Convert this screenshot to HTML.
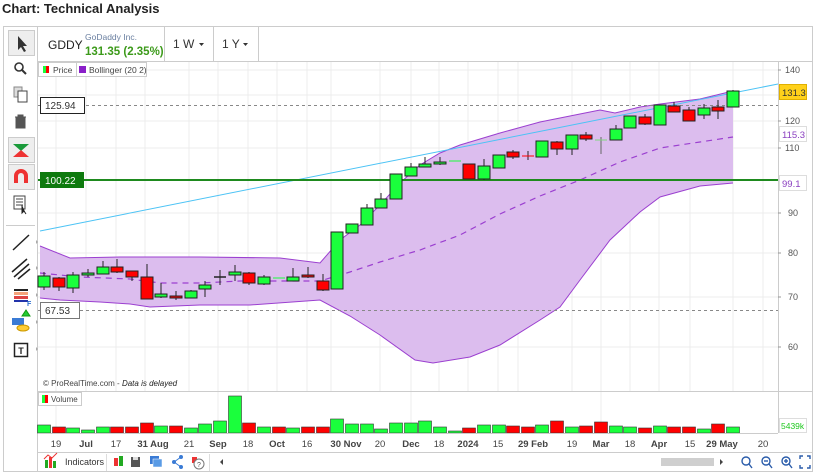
<!DOCTYPE html>
<html><head><meta charset="utf-8"><style>
html,body{margin:0;padding:0;background:#fff;width:819px;height:472px;overflow:hidden;font-family:"Liberation Sans",Arial,sans-serif}
svg{position:absolute;left:0;top:0}
text{font-family:"Liberation Sans",Arial,sans-serif}
</style></head><body>
<svg width="819" height="472" viewBox="0 0 819 472" xmlns="http://www.w3.org/2000/svg">
<text x="2" y="13" font-size="13" font-weight="bold" fill="#222">Chart: Technical Analysis</text>
<!-- outer frame -->
<rect x="3.5" y="26.5" width="809" height="445" fill="#fff" stroke="#ccc"/>
<line x1="37.5" y1="27" x2="37.5" y2="472" stroke="#ccc"/>
<!-- header -->
<line x1="38" y1="61.5" x2="812" y2="61.5" stroke="#ccc"/>
<line x1="164.5" y1="27" x2="164.5" y2="61" stroke="#ccc"/>
<line x1="213.5" y1="27" x2="213.5" y2="61" stroke="#ccc"/>
<line x1="258.5" y1="27" x2="258.5" y2="61" stroke="#ccc"/>
<text x="48" y="49" font-size="12" fill="#222">GDDY</text>
<text x="85" y="40" font-size="8.5" fill="#6a7fa0">GoDaddy Inc.</text>
<text x="85" y="55" font-size="11.5" fill="#3c9a1a" font-weight="bold">131.35 (2.35%)</text>
<text x="173" y="48" font-size="12" fill="#333">1 W</text><path d="M199 43 l5 0 l-2.5 3z" fill="#333"/>
<text x="222" y="48" font-size="12" fill="#333">1 Y</text><path d="M243 43 l5 0 l-2.5 3z" fill="#333"/>
<!-- grid -->
<g stroke="#ececec" stroke-width="1">
<line x1="56" y1="62" x2="56" y2="433"/><line x1="86" y1="62" x2="86" y2="433"/><line x1="116" y1="62" x2="116" y2="433"/><line x1="145" y1="62" x2="145" y2="433"/><line x1="189" y1="62" x2="189" y2="433"/><line x1="218" y1="62" x2="218" y2="433"/><line x1="248" y1="62" x2="248" y2="433"/><line x1="277" y1="62" x2="277" y2="433"/><line x1="307" y1="62" x2="307" y2="433"/><line x1="331" y1="62" x2="331" y2="433"/><line x1="380" y1="62" x2="380" y2="433"/><line x1="411" y1="62" x2="411" y2="433"/><line x1="439" y1="62" x2="439" y2="433"/><line x1="468" y1="62" x2="468" y2="433"/><line x1="498" y1="62" x2="498" y2="433"/><line x1="518" y1="62" x2="518" y2="433"/><line x1="572" y1="62" x2="572" y2="433"/><line x1="601" y1="62" x2="601" y2="433"/><line x1="630" y1="62" x2="630" y2="433"/><line x1="659" y1="62" x2="659" y2="433"/><line x1="690" y1="62" x2="690" y2="433"/><line x1="733" y1="62" x2="733" y2="433"/><line x1="763" y1="62" x2="763" y2="433"/>
<line x1="38" y1="70" x2="778" y2="70"/><line x1="38" y1="95" x2="778" y2="95"/><line x1="38" y1="121" x2="778" y2="121"/><line x1="38" y1="148" x2="778" y2="148"/><line x1="38" y1="213" x2="778" y2="213"/><line x1="38" y1="253" x2="778" y2="253"/><line x1="38" y1="297" x2="778" y2="297"/><line x1="38" y1="347" x2="778" y2="347"/>
</g>
<line x1="778.5" y1="62" x2="778.5" y2="433" stroke="#ccc"/>
<!-- bollinger -->
<polygon fill="#dcbdee" stroke="none" points="40,246 70,258 120,257 200,257 280,258 320,263 340,240 360,225 380,205 400,183 420,165 440,153 460,145 500,133 540,122 580,114 600,110 615,113 640,107 660,104 700,99 733,91 733,183 700,186 660,197 640,212 610,240 580,280 560,307 540,320 500,345 470,357 433,363 415,360 380,335 350,316 320,300 250,305 200,305 150,307 130,304 100,302 60,300 40,298"/>
<polyline fill="none" stroke="#9b3fd0" stroke-width="1" points="40,246 70,258 120,257 200,257 280,258 320,263 340,240 360,225 380,205 400,183 420,165 440,153 460,145 500,133 540,122 580,114 600,110 615,113 640,107 660,104 700,99 733,91"/>
<polyline fill="none" stroke="#9b3fd0" stroke-width="1" points="733,183 700,186 660,197 640,212 610,240 580,280 560,307 540,320 500,345 470,357 433,363 415,360 380,335 350,316 320,300 250,305 200,305 150,307 130,304 100,302 60,300 40,298"/>
<polyline fill="none" stroke="#9b3fd0" stroke-width="1.2" stroke-dasharray="6,5" points="40,273 80,277 130,279 160,283 200,283 240,281 280,281 320,281 350,272 380,262 420,250 460,235 500,214 540,196 580,180 620,162 660,148 700,142 733,137"/>
<line x1="40" y1="231" x2="778" y2="84" stroke="#4cc3f5" stroke-width="1"/>
<line x1="38" y1="105.5" x2="778" y2="105.5" stroke="#888" stroke-dasharray="3,3"/>
<line x1="38" y1="310.5" x2="778" y2="310.5" stroke="#888" stroke-dasharray="3,3"/>
<line x1="38" y1="180" x2="778" y2="180" stroke="#1e8a1e" stroke-width="2"/>
<!-- candles -->
<g stroke="#222" stroke-width="1">
<line x1="44" y1="272" x2="44" y2="290"/><rect x="38" y="276" width="12" height="11" fill="#1aff3c"/>
<line x1="59" y1="277" x2="59" y2="291"/><rect x="53" y="278" width="12" height="9" fill="#f00"/>
<line x1="73" y1="272" x2="73" y2="293"/><rect x="67" y="275" width="12" height="13" fill="#1aff3c"/>
<line x1="88" y1="269" x2="88" y2="277"/><rect x="82" y="273" width="12" height="2" fill="#1aff3c"/>
<line x1="103" y1="261" x2="103" y2="274"/><rect x="97" y="267" width="12" height="7" fill="#1aff3c"/>
<line x1="117" y1="259" x2="117" y2="273"/><rect x="111" y="267" width="12" height="5" fill="#f00"/>
<line x1="132" y1="271" x2="132" y2="281"/><rect x="126" y="271" width="12" height="6" fill="#f00"/>
<line x1="147" y1="264" x2="147" y2="299"/><rect x="141" y="277" width="12" height="22" fill="#f00"/>
<line x1="161" y1="283" x2="161" y2="298"/><rect x="155" y="294" width="12" height="3" fill="#1aff3c"/>
<line x1="176" y1="291" x2="176" y2="300"/><rect x="170" y="296" width="12" height="2" fill="#f00"/>
<line x1="191" y1="290" x2="191" y2="298"/><rect x="185" y="291" width="12" height="7" fill="#1aff3c"/>
<line x1="205" y1="281" x2="205" y2="297"/><rect x="199" y="285" width="12" height="4" fill="#1aff3c"/>
<line x1="220" y1="270" x2="220" y2="285"/><line x1="214" y1="277" x2="226" y2="277" stroke-width="1.5"/>
<line x1="235" y1="265" x2="235" y2="281"/><rect x="229" y="272" width="12" height="3" fill="#1aff3c"/>
<line x1="249" y1="272" x2="249" y2="285"/><rect x="243" y="273" width="12" height="10" fill="#f00"/>
<line x1="264" y1="275" x2="264" y2="285"/><rect x="258" y="277" width="12" height="7" fill="#1aff3c"/>
<line x1="273" y1="278" x2="285" y2="278" stroke="#1aff3c"/>
<line x1="293" y1="268" x2="293" y2="281"/><rect x="287" y="277" width="12" height="4" fill="#1aff3c"/>
<line x1="308" y1="267" x2="308" y2="278"/><rect x="302" y="275" width="12" height="2" fill="#f00"/>
<line x1="323" y1="274" x2="323" y2="291"/><rect x="317" y="281" width="12" height="9" fill="#f00"/>
<rect x="331" y="232" width="12" height="57" fill="#1aff3c"/>
<rect x="346" y="224" width="12" height="9" fill="#1aff3c"/>
<line x1="367" y1="204" x2="367" y2="225"/><rect x="361" y="208" width="12" height="17" fill="#1aff3c"/>
<line x1="381" y1="193" x2="381" y2="208"/><rect x="375" y="199" width="12" height="9" fill="#1aff3c"/>
<rect x="390" y="174" width="12" height="25" fill="#1aff3c"/>
<line x1="411" y1="163" x2="411" y2="176"/><rect x="405" y="167" width="12" height="9" fill="#1aff3c"/>
<line x1="425" y1="157" x2="425" y2="167"/><rect x="419" y="164" width="12" height="3" fill="#1aff3c"/>
<line x1="440" y1="157" x2="440" y2="165"/><rect x="434" y="162" width="12" height="2" fill="#1aff3c"/>
<line x1="449" y1="161" x2="461" y2="161" stroke="#1aff3c"/>
<rect x="463" y="164" width="12" height="15" fill="#f00"/>
<line x1="484" y1="159" x2="484" y2="180"/><rect x="478" y="166" width="12" height="13" fill="#1aff3c"/>
<rect x="493" y="155" width="12" height="13" fill="#1aff3c"/>
<line x1="513" y1="150" x2="513" y2="159"/><rect x="507" y="152" width="12" height="5" fill="#f00"/>
<line x1="528" y1="151" x2="528" y2="160"/><line x1="522" y1="156" x2="534" y2="156" stroke="#f00"/>
<rect x="536" y="141" width="12" height="16" fill="#1aff3c"/>
<line x1="557" y1="141" x2="557" y2="155"/><rect x="551" y="142" width="12" height="7" fill="#f00"/>
<line x1="572" y1="135" x2="572" y2="155"/><rect x="566" y="135" width="12" height="14" fill="#1aff3c"/>
<line x1="586" y1="132" x2="586" y2="141"/><rect x="580" y="135" width="12" height="4" fill="#f00"/>
<line x1="601" y1="137" x2="601" y2="154" stroke="#666"/><line x1="595" y1="140" x2="607" y2="140" stroke="#7fd77f"/>
<line x1="616" y1="125" x2="616" y2="140"/><rect x="610" y="129" width="12" height="11" fill="#1aff3c"/>
<rect x="624" y="116" width="12" height="12" fill="#1aff3c"/>
<line x1="645" y1="114" x2="645" y2="125"/><rect x="639" y="117" width="12" height="7" fill="#f00"/>
<rect x="654" y="105" width="12" height="20" fill="#1aff3c"/>
<line x1="674" y1="102" x2="674" y2="112"/><rect x="668" y="106" width="12" height="6" fill="#f00"/>
<line x1="689" y1="107" x2="689" y2="121"/><rect x="683" y="110" width="12" height="11" fill="#f00"/>
<line x1="704" y1="104" x2="704" y2="119"/><rect x="698" y="108" width="12" height="7" fill="#1aff3c"/>
<line x1="718" y1="100" x2="718" y2="119"/><rect x="712" y="107" width="12" height="4" fill="#f00"/>
<line x1="733" y1="90" x2="733" y2="107"/><rect x="727" y="91" width="12" height="16" fill="#1aff3c"/>
</g>
<!-- legend -->
<rect x="38.5" y="62.5" width="38" height="14" fill="#fff" stroke="#ccc"/>
<rect x="43" y="66" width="3" height="7" fill="#1aff3c"/><rect x="46" y="66" width="3" height="7" fill="#f00"/>
<text x="53" y="73" font-size="8.5" fill="#444">Price</text>
<rect x="76.5" y="62.5" width="70" height="14" fill="#fff" stroke="#ccc"/>
<rect x="79" y="66" width="7" height="7" fill="#8a1fc9"/>
<text x="89" y="73" font-size="8.5" fill="#444">Bollinger (20 2)</text>
<!-- level labels -->
<rect x="40.5" y="97.5" width="44" height="16" fill="#fff" stroke="#222"/>
<text x="45" y="109" font-size="10" fill="#333">125.94</text>
<rect x="40" y="172" width="44" height="16" fill="#0e7a0e"/>
<text x="45" y="184" font-size="10" fill="#fff">100.22</text>
<rect x="40.5" y="302.5" width="39" height="16" fill="#fff" stroke="#777"/>
<text x="45" y="314" font-size="10" fill="#333">67.53</text>
<!-- right axis -->
<g font-size="9" fill="#555">
<text x="785" y="73">140</text><text x="785" y="124">120</text><text x="785" y="151">110</text><text x="788" y="216">90</text><text x="788" y="256">80</text><text x="788" y="300">70</text><text x="788" y="350">60</text>
</g>
<g stroke="#999"><line x1="778" y1="70" x2="781" y2="70"/><line x1="778" y1="121" x2="781" y2="121"/><line x1="778" y1="148" x2="781" y2="148"/><line x1="778" y1="213" x2="781" y2="213"/><line x1="778" y1="253" x2="781" y2="253"/><line x1="778" y1="297" x2="781" y2="297"/><line x1="778" y1="347" x2="781" y2="347"/></g>
<rect x="779.5" y="84.5" width="27" height="15" fill="#ffd11a" stroke="#e0b000"/>
<text x="782" y="96" font-size="9.5" fill="#333">131.3</text>
<rect x="779.5" y="126.5" width="27" height="15" fill="#fff" stroke="#ddd"/>
<text x="782" y="138" font-size="9.5" fill="#8a3fc0">115.3</text>
<rect x="779.5" y="175.5" width="27" height="15" fill="#fff" stroke="#ddd"/>
<text x="782" y="187" font-size="9.5" fill="#8a3fc0">99.1</text>
<text x="43" y="386" font-size="8" fill="#444">© ProRealTime.com - <tspan font-style="italic" fill="#222">Data is delayed</tspan></text>
<!-- volume panel -->
<line x1="38" y1="391.5" x2="812" y2="391.5" stroke="#ccc"/>
<rect x="38" y="392" width="740" height="41" fill="#fff"/>
<g stroke="#ececec"><line x1="56" y1="392" x2="56" y2="433"/><line x1="218" y1="392" x2="218" y2="433"/><line x1="411" y1="392" x2="411" y2="433"/><line x1="601" y1="392" x2="601" y2="433"/></g>
<g stroke="#333" stroke-width="0.6">
<rect x="37.5" y="425" width="13" height="8" fill="#1aff3c"/>
<rect x="52.5" y="427" width="13" height="6" fill="#f00"/>
<rect x="66.5" y="428" width="13" height="5" fill="#1aff3c"/>
<rect x="81.5" y="430" width="13" height="3" fill="#1aff3c"/>
<rect x="96.5" y="427" width="13" height="6" fill="#1aff3c"/>
<rect x="110.5" y="427" width="13" height="6" fill="#f00"/>
<rect x="125.5" y="427" width="13" height="6" fill="#f00"/>
<rect x="140.5" y="423" width="13" height="10" fill="#f00"/>
<rect x="154.5" y="426" width="13" height="7" fill="#1aff3c"/>
<rect x="169.5" y="426" width="13" height="7" fill="#f00"/>
<rect x="184.5" y="428" width="13" height="5" fill="#1aff3c"/>
<rect x="198.5" y="424" width="13" height="9" fill="#1aff3c"/>
<rect x="213.5" y="421" width="13" height="12" fill="#1aff3c"/>
<rect x="228.5" y="396" width="13" height="37" fill="#1aff3c"/>
<rect x="242.5" y="423" width="13" height="10" fill="#f00"/>
<rect x="257.5" y="427" width="13" height="6" fill="#1aff3c"/>
<rect x="272.5" y="427" width="13" height="6" fill="#f00"/>
<rect x="286.5" y="428" width="13" height="5" fill="#1aff3c"/>
<rect x="301.5" y="427" width="13" height="6" fill="#f00"/>
<rect x="316.5" y="427" width="13" height="6" fill="#f00"/>
<rect x="330.5" y="419" width="13" height="14" fill="#1aff3c"/>
<rect x="345.5" y="424" width="13" height="9" fill="#1aff3c"/>
<rect x="360.5" y="424" width="13" height="9" fill="#1aff3c"/>
<rect x="374.5" y="429" width="13" height="4" fill="#1aff3c"/>
<rect x="389.5" y="423" width="13" height="10" fill="#1aff3c"/>
<rect x="404.5" y="423" width="13" height="10" fill="#1aff3c"/>
<rect x="418.5" y="421" width="13" height="12" fill="#1aff3c"/>
<rect x="433.5" y="427" width="13" height="6" fill="#1aff3c"/>
<rect x="448.5" y="431" width="13" height="2" fill="#1aff3c"/>
<rect x="462.5" y="428" width="13" height="5" fill="#f00"/>
<rect x="477.5" y="425" width="13" height="8" fill="#1aff3c"/>
<rect x="492.5" y="425" width="13" height="8" fill="#1aff3c"/>
<rect x="506.5" y="426" width="13" height="7" fill="#f00"/>
<rect x="521.5" y="427" width="13" height="6" fill="#f00"/>
<rect x="535.5" y="425" width="13" height="8" fill="#1aff3c"/>
<rect x="550.5" y="421" width="13" height="12" fill="#f00"/>
<rect x="565.5" y="427" width="13" height="6" fill="#1aff3c"/>
<rect x="579.5" y="426" width="13" height="7" fill="#f00"/>
<rect x="594.5" y="422" width="13" height="11" fill="#f00"/>
<rect x="609.5" y="426" width="13" height="7" fill="#1aff3c"/>
<rect x="623.5" y="427" width="13" height="6" fill="#1aff3c"/>
<rect x="638.5" y="428" width="13" height="5" fill="#f00"/>
<rect x="653.5" y="426" width="13" height="7" fill="#1aff3c"/>
<rect x="667.5" y="427" width="13" height="6" fill="#f00"/>
<rect x="682.5" y="427" width="13" height="6" fill="#f00"/>
<rect x="697.5" y="429" width="13" height="4" fill="#1aff3c"/>
<rect x="711.5" y="424" width="13" height="9" fill="#f00"/>
<rect x="726.5" y="427" width="13" height="6" fill="#1aff3c"/>
</g>
<rect x="38.5" y="392.5" width="43" height="13" fill="#fff" stroke="#ccc"/>
<rect x="42" y="395" width="3" height="8" fill="#1aff3c"/><rect x="45" y="395" width="3" height="8" fill="#f00"/>
<text x="51" y="402" font-size="8" fill="#444">Volume</text>
<rect x="779.5" y="418.5" width="27" height="14" fill="#fff" stroke="#ddd"/>
<text x="781" y="429" font-size="8.5" fill="#1ec81e">5439k</text>
<line x1="38" y1="433.5" x2="778" y2="433.5" stroke="#ccc"/>
<!-- x axis -->
<g font-size="9.5" fill="#444" text-anchor="middle">
<text x="56" y="447">19</text><text x="86" y="447" font-weight="bold">Jul</text><text x="116" y="447">17</text><text x="153" y="447" font-weight="bold">31 Aug</text><text x="189" y="447">21</text><text x="218" y="447" font-weight="bold">Sep</text><text x="248" y="447">18</text><text x="277" y="447" font-weight="bold">Oct</text><text x="307" y="447">16</text><text x="346" y="447" font-weight="bold">30 Nov</text><text x="380" y="447">20</text><text x="411" y="447" font-weight="bold">Dec</text><text x="439" y="447">18</text><text x="468" y="447" font-weight="bold">2024</text><text x="498" y="447">15</text><text x="533" y="447" font-weight="bold">29 Feb</text><text x="572" y="447">19</text><text x="601" y="447" font-weight="bold">Mar</text><text x="630" y="447">18</text><text x="659" y="447" font-weight="bold">Apr</text><text x="690" y="447">15</text><text x="722" y="447" font-weight="bold">29 May</text><text x="763" y="447">20</text>
</g>
<line x1="38" y1="452.5" x2="812" y2="452.5" stroke="#ccc"/>
<!-- bottom toolbar -->
<g>
<rect x="45" y="460" width="3" height="8" fill="#2a2"/><rect x="49" y="457" width="3" height="11" fill="#e33"/><rect x="53" y="461" width="3" height="7" fill="#2a2"/><path d="M44 459 l4 -4 l4 3 l5 -5" stroke="#e33" fill="none"/>
<text x="65" y="465" font-size="9" fill="#333">Indicators</text>
<line x1="106.5" y1="454" x2="106.5" y2="471" stroke="#ddd"/>
<rect x="114" y="458" width="4" height="8" fill="#e33"/><rect x="119" y="456" width="4" height="10" fill="#2a2"/>
<rect x="131" y="457" width="9" height="10" fill="#555"/><rect x="133" y="457" width="5" height="3" fill="#ddd"/>
<rect x="150" y="456" width="9" height="8" fill="#3a7bd5"/><rect x="153" y="459" width="9" height="8" fill="#5a9be5" stroke="#fff" stroke-width="0.5"/>
<circle cx="174" cy="462" r="2" fill="#3a7bd5"/><circle cx="181" cy="457" r="2" fill="#3a7bd5"/><circle cx="181" cy="467" r="2" fill="#3a7bd5"/><path d="M174 462 L181 457 M174 462 L181 467" stroke="#3a7bd5"/>
<rect x="192" y="457" width="5" height="6" fill="#e33"/><circle cx="199" cy="464" r="5" fill="#fff" stroke="#777"/><text x="199" y="467" font-size="7" text-anchor="middle" fill="#555">?</text>
<line x1="209.5" y1="454" x2="209.5" y2="471" stroke="#ddd"/>
<path d="M223 459 l-3 3 l3 3z" fill="#444"/>
<rect x="661" y="458" width="53" height="8" fill="#cfcfcf"/>
<path d="M720 459 l3 3 l-3 3z" fill="#444"/>
<g stroke="#2a5caa" fill="none" stroke-width="1.4">
<circle cx="746" cy="461" r="4"/><line x1="749" y1="464" x2="752" y2="468"/>
<circle cx="766" cy="461" r="4"/><line x1="769" y1="464" x2="772" y2="468"/><line x1="764" y1="461" x2="768" y2="461"/>
<circle cx="786" cy="461" r="4"/><line x1="789" y1="464" x2="792" y2="468"/><line x1="784" y1="461" x2="788" y2="461"/><line x1="786" y1="459" x2="786" y2="463"/>
<path d="M800 459 v-3 h3 M810 459 v-3 h-3 M800 465 v3 h3 M810 465 v3 h-3"/>
</g>
</g>
<!-- left toolbar -->
<rect x="8.5" y="30.5" width="26" height="25" fill="#eee" stroke="#ccc"/>
<path d="M18 36 L18 50 L21 47 L24 52 L26 51 L23 46 L27 46 Z" fill="#333"/>
<circle cx="19" cy="67" r="4" fill="none" stroke="#333" stroke-width="1.6"/><line x1="22" y1="70" x2="26" y2="74" stroke="#333" stroke-width="2"/>
<rect x="14" y="87" width="8" height="10" fill="#ddd" stroke="#888"/><rect x="18" y="91" width="9" height="11" fill="#fff" stroke="#444"/>
<path d="M15 117 h11 M18 117 v-2 h5 v2 M16 118 h9 v10 h-9z" fill="#555" stroke="#555"/>
<rect x="8.5" y="137.5" width="26" height="25" fill="#eee" stroke="#ccc"/>
<path d="M13 144 h16 l-8 7z" fill="#1a9a3a"/><path d="M13 157 h16 l-8 -7z" fill="#e33"/>
<rect x="8.5" y="164.5" width="26" height="25" fill="#eee" stroke="#ccc"/>
<path d="M14 183 v-7 a7 7 0 0 1 14 0 v7 h-4 v-7 a3 3 0 0 0 -6 0 v7z" fill="#e33"/>
<rect x="14" y="196" width="11" height="13" fill="#fff" stroke="#444"/><path d="M16 199 h7 M16 202 h7 M16 205 h7" stroke="#444"/><path d="M22 205 l0 8 l2 -2 l2 3" stroke="#222" fill="#222"/>
<line x1="6" y1="225.5" x2="35" y2="225.5" stroke="#ccc"/>
<line x1="13" y1="250" x2="29" y2="235" stroke="#222" stroke-width="1.5"/>
<path d="M12 272 l15 -13 M14 277 l15 -13 M18 279 l12 -10" stroke="#222" stroke-width="1.5"/>
<rect x="14" y="289" width="14" height="2" fill="#222"/><rect x="14" y="292" width="14" height="3" fill="#f5a37a"/><rect x="14" y="296" width="14" height="3" fill="#d44"/><rect x="14" y="300" width="14" height="2" fill="#23a"/><text x="27" y="306" font-size="7" fill="#2a6ed1" font-weight="bold">F</text>
<path d="M22 316 l4 -6 l4 6z" fill="#2c3" stroke="#191"/><rect x="12" y="318" width="12" height="7" fill="#3a7bd5"/><ellipse cx="23" cy="328" rx="6" ry="3" fill="#fc3" stroke="#c90"/>
<rect x="14.5" y="343.5" width="13" height="13" fill="#fff" stroke="#222" stroke-width="1.5"/><text x="21" y="354" font-size="9" font-weight="bold" text-anchor="middle" fill="#222">T</text>
<g fill="#aaa"><path d="M36 240 l2 2 l-2 2z"/><path d="M36 266 l2 2 l-2 2z"/><path d="M36 293 l2 2 l-2 2z"/><path d="M36 320 l2 2 l-2 2z"/><path d="M36 347 l2 2 l-2 2z"/></g>
</svg>
</body></html>
